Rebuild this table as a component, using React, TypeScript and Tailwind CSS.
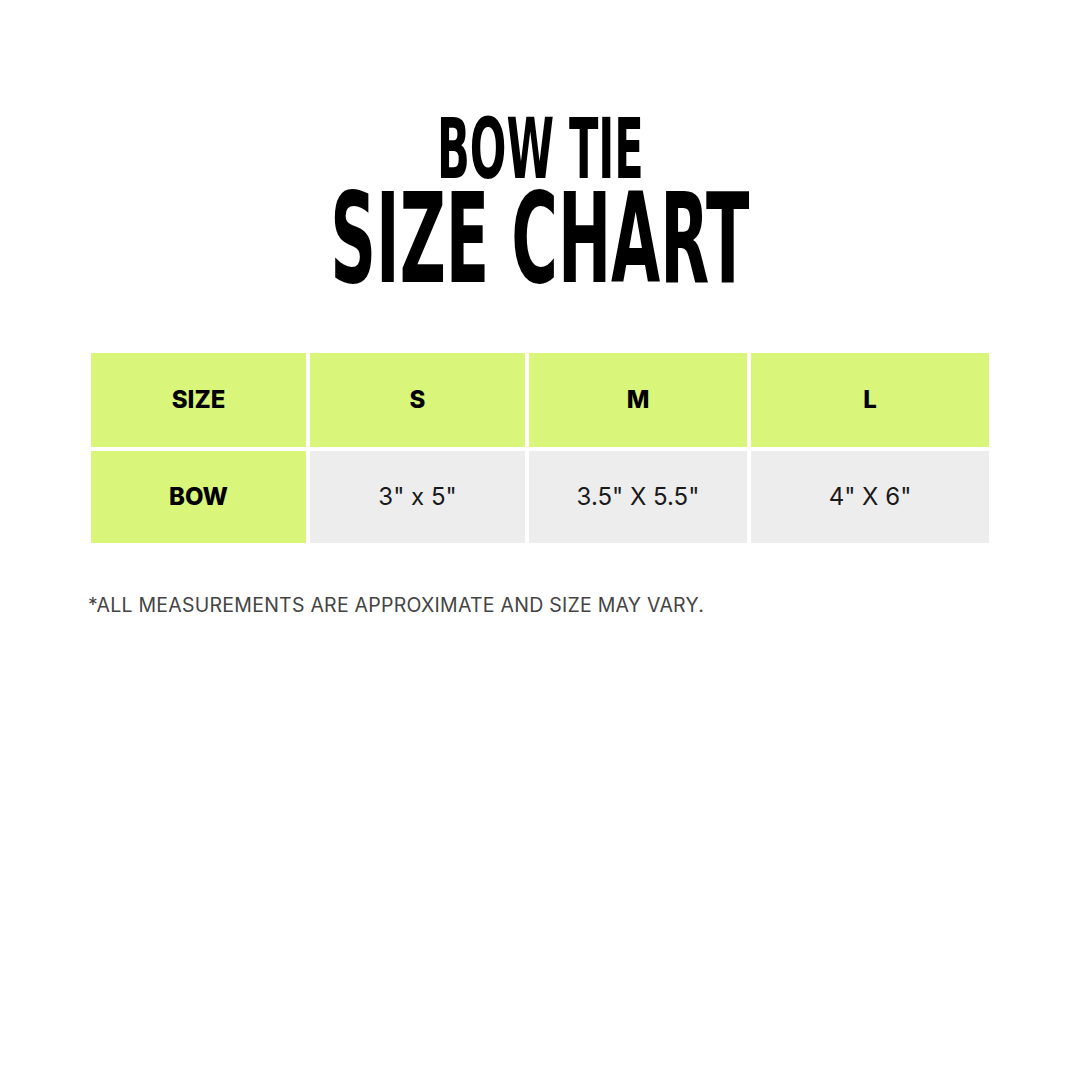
const HEADERS = ['SIZE', 'S', 'M', 'L']
const VALUES = ['3" x 5"', '3.5" X 5.5"', '4" X 6"']

export default function App() {
  return (
    <main className="flex h-[1080px] w-[1080px] flex-col items-center bg-white" style={{ fontFamily: 'Inter, "Open Sans", sans-serif' }}>
      <div className="mt-[117px] flex flex-col items-center font-['DejaVu_Sans_Condensed',sans-serif] font-bold text-black">
        <span className="inline-block origin-center scale-x-[0.57] whitespace-nowrap text-[84px] leading-[64px]">BOW TIE</span>
        <span className="mt-[11px] inline-block origin-center scale-x-[0.565] whitespace-nowrap text-[125px] leading-[94px]">SIZE CHART</span>
      </div>

      <div className="mt-[67px] ml-[91px] grid w-[898px] grid-cols-[215px_215px_218px_238px] grid-rows-[94px_92px] gap-[4px] self-start">
        {HEADERS.map((label) => (
          <div key={label} className="flex items-center justify-center bg-[#d9f57a] text-[24px] font-extrabold text-black">
            {label}
          </div>
        ))}
        <div className="flex items-center justify-center bg-[#d9f57a] text-[24px] font-extrabold text-black">BOW</div>
        {VALUES.map((value) => (
          <div key={value} className="flex items-center justify-center bg-[#ededed] text-[24px] text-[#1a1a1a]">
            {value}
          </div>
        ))}
      </div>

      <p className="mt-[48px] ml-[88px] self-start text-[19.5px] tracking-[0.25px] text-[#444]">*ALL MEASUREMENTS ARE APPROXIMATE AND SIZE MAY VARY.</p>
    </main>
  )
}
